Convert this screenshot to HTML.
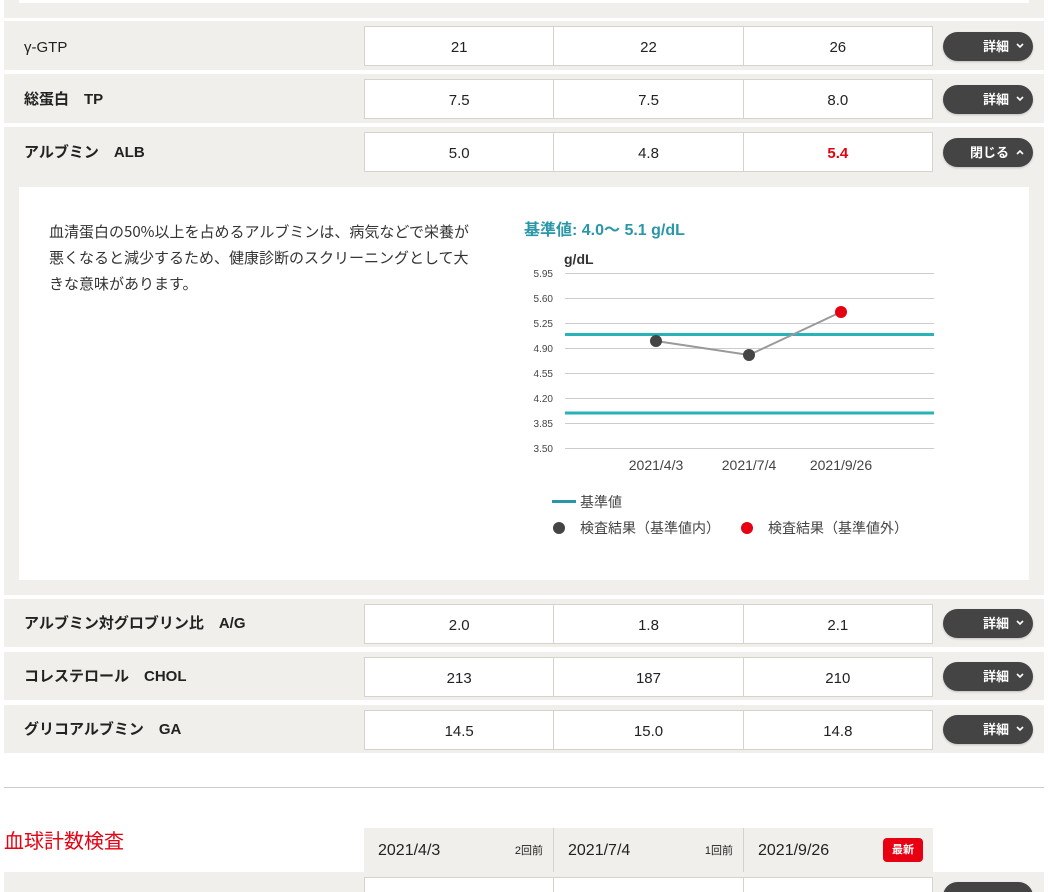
<!DOCTYPE html>
<html><head><meta charset="utf-8"><style>
*{margin:0;padding:0;box-sizing:border-box}
html,body{width:1048px;height:892px;overflow:hidden}
body{background:#fff;font-family:"Liberation Sans","Noto Sans CJK JP",sans-serif;color:#222;position:relative}
.a{position:absolute}
.row{position:absolute;left:4px;width:1040px;background:#f0efeb}
.lab{position:absolute;left:24px;font-size:15px;font-weight:bold;color:#222;line-height:20px}
.cells{position:absolute;left:364px;width:569px;height:40px;background:#fff;border:1px solid #d6d3cc;display:flex}
.cells div{flex:1;text-align:center;line-height:42px;font-size:15px;border-left:1px solid #d6d3cc}
.cells div:first-child{border-left:none}
.btn{position:absolute;left:943px;width:90px;height:29px;border-radius:15px;background:#444;color:#fff;font-size:13px;font-weight:bold;line-height:29px;text-align:right;padding-right:24px;box-shadow:0 1px 2px rgba(0,0,0,.2)}
.btn svg{position:absolute;right:9px;top:11px}
</style></head><body>
<div class="row" style="top:0;height:18px"></div>
<div class="a" style="left:19px;top:0;width:1010px;height:3px;background:#fff"></div>

<div class="row" style="top:21px;height:49px"></div>
<div class="lab" style="top:38px;font-weight:normal">γ-GTP</div>
<div class="cells" style="top:26px"><div>21</div><div>22</div><div>26</div></div>
<div class="btn" style="top:32px">詳細<svg width="8" height="6" viewBox="0 0 8 6"><path d="M1 1l3 3 3-3" stroke="#fff" stroke-width="1.6" fill="none"/></svg></div>

<div class="row" style="top:74px;height:49px"></div>
<div class="lab" style="top:90px">総蛋白　TP</div>
<div class="cells" style="top:79px"><div>7.5</div><div>7.5</div><div>8.0</div></div>
<div class="btn" style="top:85px">詳細<svg width="8" height="6" viewBox="0 0 8 6"><path d="M1 1l3 3 3-3" stroke="#fff" stroke-width="1.6" fill="none"/></svg></div>

<div class="row" style="top:127px;height:468px"></div>
<div class="lab" style="top:143px">アルブミン　ALB</div>
<div class="cells" style="top:132px"><div>5.0</div><div>4.8</div><div style="color:#e60012;font-weight:bold">5.4</div></div>
<div class="btn" style="top:138px">閉じる<svg width="8" height="6" viewBox="0 0 8 6"><path d="M1 5l3-3 3 3" stroke="#fff" stroke-width="1.6" fill="none"/></svg></div>

<div class="a" style="left:19px;top:187px;width:1010px;height:393px;background:#fff"></div>
<div class="a" style="left:49px;top:219px;width:434px;font-size:15px;line-height:26px;color:#333;font-family:'Noto Sans CJK JP',sans-serif">血清蛋白の50%以上を占めるアルブミンは、病気などで栄養が悪くなると減少するため、健康診断のスクリーニングとして大きな意味があります。</div>
<div class="a" style="left:524px;top:216px;font-size:16px;font-weight:bold;color:#2a97a8">基準値: 4.0～ 5.1 g/dL</div>

<svg class="a" style="left:0;top:0" width="1048" height="892">
<text x="564" y="264" font-size="14" font-weight="bold" fill="#333" font-family="Liberation Sans,sans-serif">g/dL</text>
<g stroke="#ccc" stroke-width="1">
<line x1="565" x2="934" y1="273.5" y2="273.5"/><line x1="565" x2="934" y1="298.5" y2="298.5"/><line x1="565" x2="934" y1="323.5" y2="323.5"/><line x1="565" x2="934" y1="348.5" y2="348.5"/><line x1="565" x2="934" y1="373.5" y2="373.5"/><line x1="565" x2="934" y1="398.5" y2="398.5"/><line x1="565" x2="934" y1="423.5" y2="423.5"/><line x1="565" x2="934" y1="448.5" y2="448.5"/>
</g>
<g font-size="10" fill="#444" font-family="Liberation Sans,sans-serif" text-anchor="end">
<text x="553" y="277">5.95</text><text x="553" y="302">5.60</text><text x="553" y="327">5.25</text><text x="553" y="352">4.90</text><text x="553" y="377">4.55</text><text x="553" y="402">4.20</text><text x="553" y="427">3.85</text><text x="553" y="452">3.50</text>
</g>
<line x1="565" x2="934" y1="334.5" y2="334.5" stroke="#27b3b8" stroke-width="3"/>
<line x1="565" x2="934" y1="413" y2="413" stroke="#27b3b8" stroke-width="3"/>
<polyline points="656,341 749,355 841,312" fill="none" stroke="#999" stroke-width="2"/>
<circle cx="656" cy="341" r="6" fill="#444"/><circle cx="749" cy="355" r="6" fill="#444"/><circle cx="841" cy="312" r="6" fill="#e60012"/>
<g font-size="14" fill="#444" font-family="Liberation Sans,sans-serif" text-anchor="middle">
<text x="656" y="470">2021/4/3</text><text x="749" y="470">2021/7/4</text><text x="841" y="470">2021/9/26</text>
</g>
<line x1="552" x2="576" y1="501.5" y2="501.5" stroke="#2a97a8" stroke-width="3"/>
<circle cx="559" cy="528" r="6" fill="#444"/><circle cx="747" cy="528" r="6" fill="#e60012"/>
</svg>
<div class="a" style="left:580px;top:492px;font-size:14px;color:#444">基準値</div>
<div class="a" style="left:580px;top:518px;font-size:14px;color:#444">検査結果（基準値内）</div>
<div class="a" style="left:768px;top:518px;font-size:14px;color:#444">検査結果（基準値外）</div>

<div class="row" style="top:599px;height:48px"></div>
<div class="lab" style="top:614px">アルブミン対グロブリン比　A/G</div>
<div class="cells" style="top:604px"><div>2.0</div><div>1.8</div><div>2.1</div></div>
<div class="btn" style="top:609px">詳細<svg width="8" height="6" viewBox="0 0 8 6"><path d="M1 1l3 3 3-3" stroke="#fff" stroke-width="1.6" fill="none"/></svg></div>

<div class="row" style="top:652px;height:48px"></div>
<div class="lab" style="top:667px">コレステロール　CHOL</div>
<div class="cells" style="top:657px"><div>213</div><div>187</div><div>210</div></div>
<div class="btn" style="top:662px">詳細<svg width="8" height="6" viewBox="0 0 8 6"><path d="M1 1l3 3 3-3" stroke="#fff" stroke-width="1.6" fill="none"/></svg></div>

<div class="row" style="top:705px;height:48px"></div>
<div class="lab" style="top:720px">グリコアルブミン　GA</div>
<div class="cells" style="top:710px"><div>14.5</div><div>15.0</div><div>14.8</div></div>
<div class="btn" style="top:715px">詳細<svg width="8" height="6" viewBox="0 0 8 6"><path d="M1 1l3 3 3-3" stroke="#fff" stroke-width="1.6" fill="none"/></svg></div>

<div class="a" style="left:4px;top:787px;width:1040px;height:1px;background:#ccc"></div>
<div class="a" style="left:4px;top:825px;font-size:20px;color:#e60012">血球計数検査</div>
<div class="a" style="left:364px;top:828px;width:569px;height:44px;background:#f0efeb;display:flex">
<div style="flex:1;position:relative;font-size:16px;line-height:46px;padding-left:14px">2021/4/3<span style="position:absolute;right:10px;font-size:11px">2回前</span></div>
<div style="flex:1;position:relative;font-size:16px;line-height:46px;padding-left:14px;border-left:1px solid #d6d3cc">2021/7/4<span style="position:absolute;right:10px;font-size:11px">1回前</span></div>
<div style="flex:1;position:relative;font-size:16px;line-height:46px;padding-left:14px;border-left:1px solid #d6d3cc">2021/9/26<span style="position:absolute;right:10px;top:10px;width:40px;height:24px;background:#e60012;color:#fff;border-radius:4px;font-size:11px;font-weight:bold;line-height:24px;text-align:center">最新</span></div>
</div>
<div class="row" style="top:872px;height:20px"></div>
<div class="cells" style="top:877px"><div></div><div></div><div></div></div>
<div class="btn" style="top:882px"></div>
</body></html>
